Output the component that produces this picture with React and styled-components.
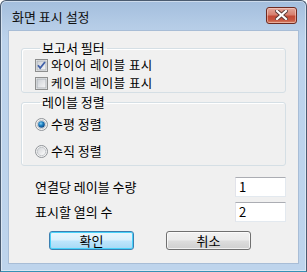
import React from "react";
import styled, { createGlobalStyle } from "styled-components";

const GlobalStyle = createGlobalStyle`
  html, body {
    margin: 0;
    padding: 0;
    background: #ffffff;
  }
  body {
    font-family: "Noto Sans CJK KR", "Noto Sans", sans-serif;
    font-size: 13px;
    color: #000;
  }
`;

const Window = styled.div`
  width: 307px;
  height: 272px;
  box-sizing: border-box;
  border: 1px solid #4a5b70;
  border-bottom-color: #3591b4;
  border-radius: 6px 6px 0 0;
  background: linear-gradient(to bottom, #a3bedd 0px, #b6cde7 26px, #bcd3ec 40px, #bed4ec 100%);
  box-shadow: inset 0 0 0 1px rgba(255, 255, 255, 0.45);
  display: flex;
  flex-direction: column;
  padding: 0 7px 7px 7px;
`;

const TitleBar = styled.div`
  height: 29px;
  display: flex;
  align-items: center;
  justify-content: space-between;
  padding: 2px 2px 0 4px;
  box-sizing: border-box;
`;

const Title = styled.span`
  font-size: 13px;
  color: #111;
`;

const CloseButton = styled.div`
  width: 31px;
  height: 17px;
  box-sizing: border-box;
  border: 1px solid #6e2a20;
  border-radius: 3px;
  background: linear-gradient(to bottom, #e2a79b 0%, #d7806f 45%, #c24a36 55%, #c7553f 80%, #d6866b 100%);
  box-shadow: inset 0 0 0 1px rgba(255, 220, 210, 0.5);
  display: flex;
  align-items: center;
  justify-content: center;
  margin-top: -3px;
`;

const Client = styled.div`
  flex: 1;
  background: #f0f0f0;
  border: 1px solid #a8bdd6;
  display: flex;
  flex-direction: column;
  padding: 9px 12px 0 12px;
`;

const Group = styled.fieldset`
  margin: 0 0 ${(p) => p.$after || 0}px 0;
  padding: ${(p) => p.$pad};
  border: 1px solid #d5dfe5;
  border-radius: 3px;
  box-shadow: 1px 1px 0 #ffffff inset;
  min-width: 0;
  display: flex;
  flex-direction: column;
  gap: ${(p) => p.$gap || 0}px;
`;

const Legend = styled.legend`
  padding: 0 2px;
  margin-left: 5px;
  line-height: 16px;
`;

const OptionRow = styled.label`
  display: flex;
  align-items: center;
  gap: 3px;
  height: ${(p) => p.$h}px;
  line-height: ${(p) => p.$h}px;
  white-space: nowrap;
  font-size: ${(p) => (p.$tight ? "12.4px" : "13px")};
  letter-spacing: ${(p) => (p.$tight ? "0.5px" : "0")};
`;

const FieldRow = styled.div`
  display: flex;
  align-items: center;
  justify-content: space-between;
  height: 20px;
  line-height: 20px;
  padding-left: 14px;
  margin-top: ${(p) => p.$top}px;
`;

const TextBox = styled.div`
  width: 51px;
  height: 20px;
  box-sizing: border-box;
  background: #ffffff;
  border: 1px solid #e3e9ef;
  border-top-color: #abadb3;
  border-left-color: #e2e3ea;
  padding: 0 3px;
  line-height: 17px;
  font-size: 13px;
`;

const ButtonRow = styled.div`
  display: flex;
  gap: 32px;
  padding-left: 28px;
  margin-top: 9px;
`;

const Button = styled.div`
  width: 85px;
  height: 19px;
  box-sizing: border-box;
  border: 1px solid ${(p) => (p.$primary ? "#3c7fb1" : "#707070")};
  border-radius: 3px;
  background: ${(p) =>
    p.$primary
      ? "linear-gradient(to bottom, #eaf6fd 0%, #d9f0fc 48%, #bee6fd 52%, #a7d9f5 100%)"
      : "linear-gradient(to bottom, #f2f2f2 0%, #ebebeb 48%, #dddddd 52%, #cfcfcf 100%)"};
  box-shadow: ${(p) =>
    p.$primary ? "inset 0 0 0 1px #48d2fa" : "inset 0 0 0 1px rgba(255,255,255,0.7)"};
  display: flex;
  align-items: center;
  justify-content: center;
  line-height: 17px;
`;

const CloseIcon = () => (
  <svg width="13" height="10" viewBox="0 0 13 10">
    <path d="M2 1 L11 9 M11 1 L2 9" stroke="#5a3a36" strokeWidth="4" strokeLinecap="square" />
    <path d="M2 1 L11 9 M11 1 L2 9" stroke="#ffffff" strokeWidth="2.2" strokeLinecap="square" />
  </svg>
);

const CheckBox = ({ checked }) => (
  <svg width="13" height="13" viewBox="0 0 13 13">
    <defs>
      <linearGradient id="cbIn" x1="0" y1="0" x2="1" y2="1">
        <stop offset="0" stopColor="#cbcfd5" />
        <stop offset="1" stopColor="#f7f7f7" />
      </linearGradient>
    </defs>
    <rect x="0.5" y="0.5" width="12" height="12" fill="#f4f4f4" stroke="#8e8f8f" />
    <rect x="2" y="2" width="9" height="9" fill="url(#cbIn)" stroke="#aeb3b9" strokeWidth="1" />
    {checked && (
      <path d="M3 6.2 L5.2 9 L10 3" fill="none" stroke="#4060a8" strokeWidth="1.8" />
    )}
  </svg>
);

const Radio = ({ checked }) => (
  <svg width="13" height="13" viewBox="0 0 13 13">
    <defs>
      <linearGradient id="rdOut" x1="0" y1="0" x2="1" y2="1">
        <stop offset="0" stopColor="#d0d2d6" />
        <stop offset="1" stopColor="#ffffff" />
      </linearGradient>
      <radialGradient id="rdOn" cx="0.4" cy="0.35" r="0.7">
        <stop offset="0" stopColor="#8ad3f5" />
        <stop offset="0.45" stopColor="#1d7fc0" />
        <stop offset="1" stopColor="#0d3f7a" />
      </radialGradient>
    </defs>
    <circle cx="6.5" cy="6.5" r="6" fill="#f3f3f3" stroke="#8f9398" />
    <circle cx="6.5" cy="6.5" r="4.2" fill="url(#rdOut)" stroke="#b9bcc1" strokeWidth="0.8" />
    {checked && <circle cx="6.5" cy="6.5" r="3.3" fill="url(#rdOn)" />}
  </svg>
);

export default function App() {
  return (
    <>
      <GlobalStyle />
      <Window>
        <TitleBar>
          <Title>화면 표시 설정</Title>
          <CloseButton>
            <CloseIcon />
          </CloseButton>
        </TitleBar>
        <Client>
          <Group $pad="0 0 0 13px" $after={1}>
            <Legend>보고서 필터</Legend>
            <OptionRow $h={18} $tight>
              <CheckBox checked />
              와이어 레이블 표시
            </OptionRow>
            <OptionRow $h={18} $tight>
              <CheckBox />
              케이블 레이블 표시
            </OptionRow>
          </Group>
          <Group $pad="5px 0 5px 13px" $gap={9}>
            <Legend>레이블 정렬</Legend>
            <OptionRow $h={18}>
              <Radio checked />
              수평 정렬
            </OptionRow>
            <OptionRow $h={18}>
              <Radio />
              수직 정렬
            </OptionRow>
          </Group>
          <FieldRow $top={11}>
            <span>연결당 레이블 수량</span>
            <TextBox>1</TextBox>
          </FieldRow>
          <FieldRow $top={5}>
            <span>표시할 열의 수</span>
            <TextBox>2</TextBox>
          </FieldRow>
          <ButtonRow>
            <Button $primary>확인</Button>
            <Button>취소</Button>
          </ButtonRow>
        </Client>
      </Window>
    </>
  );
}
